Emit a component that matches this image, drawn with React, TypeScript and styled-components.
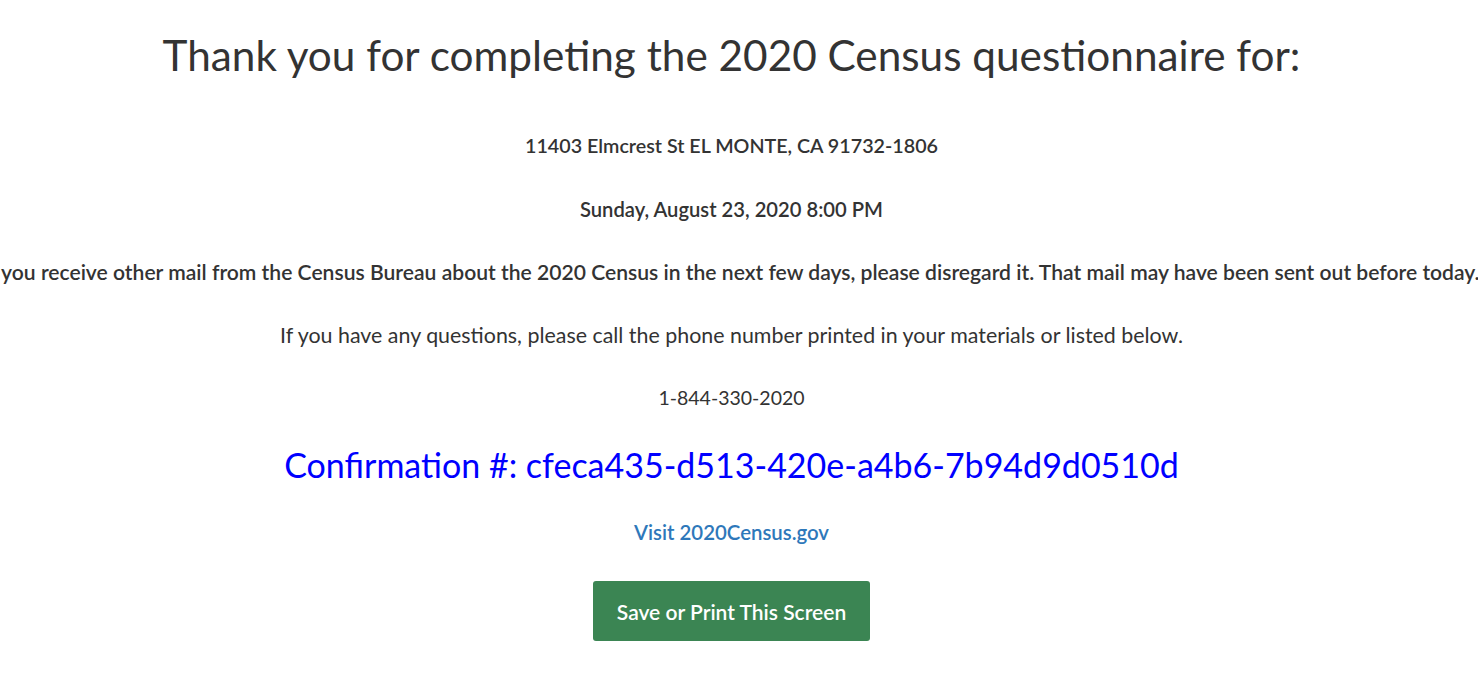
import React from "react";
import styled, { createGlobalStyle } from "styled-components";

const Global = createGlobalStyle`
  html, body { margin: 0; padding: 0; background: #fff; overflow-x: hidden; }
  body { font-family: Lato, "Liberation Sans", sans-serif; color: #333; }
`;

const Page = styled.main`
  width: 1463px;
  display: flex;
  flex-direction: column;
  align-items: center;
  text-align: center;
  padding-top: 30px;
`;

const Title = styled.h1`
  margin: 0 0 54px;
  font-size: 42.3px;
  font-weight: 400;
  line-height: 50px;
  color: #333;
  white-space: nowrap;
`;

const Line = styled.p<{ $bold?: boolean; $size?: number }>`
  margin: 0 0 39px;
  font-size: ${(p) => p.$size ?? 20}px;
  line-height: 24px;
  font-weight: ${(p) => (p.$bold ? 600 : 400)};
  color: #333;
  white-space: nowrap;
`;

const Confirmation = styled.h2`
  margin: 0 0 38px;
  font-size: 34px;
  line-height: 32px;
  font-weight: 400;
  color: #0000ff;
  white-space: nowrap;
`;

const Link = styled.a`
  font-size: 20.4px;
  line-height: 26px;
  font-weight: 600;
  color: #2e78ba;
  text-decoration: none;
  margin-bottom: 36px;
`;

const Button = styled.button`
  width: 277px;
  height: 60px;
  padding: 0;
  border: none;
  border-radius: 3px;
  background: #3b8553;
  color: #fff;
  font-family: Lato, "Liberation Sans", sans-serif;
  font-size: 21px;
  font-weight: 600;
  cursor: pointer;
`;

export default function App() {
  return (
    <>
      <Global />
      <Page>
        <Title>Thank you for completing the 2020 Census questionnaire for:</Title>
        <Line $bold $size={19.7}>11403 Elmcrest St EL MONTE, CA 91732-1806</Line>
        <Line $bold $size={20.2}>Sunday, August 23, 2020 8:00 PM</Line>
        <Line $bold $size={21.1}>
          If you receive other mail from the Census Bureau about the 2020 Census in the next few days, please disregard it. That mail may have been sent out before today.
        </Line>
        <Line $size={21.4}>If you have any questions, please call the phone number printed in your materials or listed below.</Line>
        <Line $size={19.5}>1-844-330-2020</Line>
        <Confirmation>Confirmation #: cfeca435-d513-420e-a4b6-7b94d9d0510d</Confirmation>
        <Link href="#">Visit 2020Census.gov</Link>
        <Button>Save or Print This Screen</Button>
      </Page>
    </>
  );
}
